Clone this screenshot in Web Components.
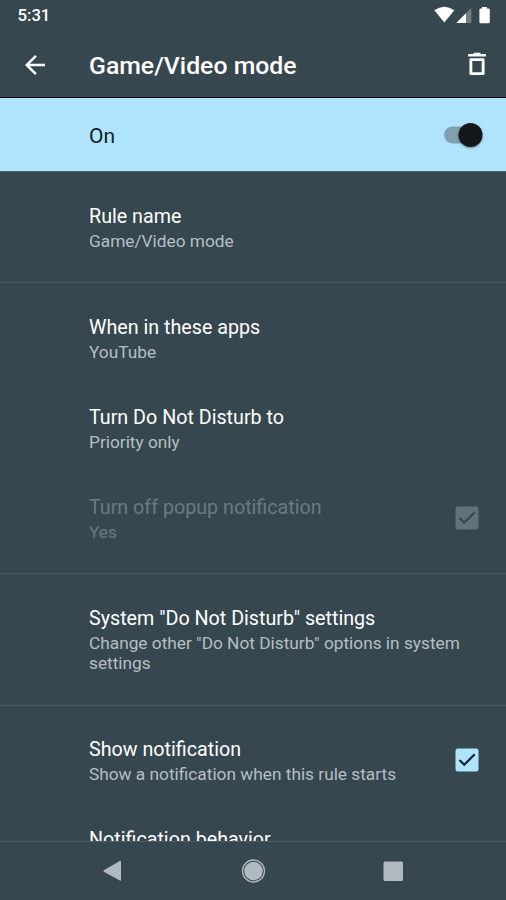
<!DOCTYPE html>
<html lang="en">
<head>
<meta charset="utf-8">
<title>Game/Video mode</title>
<style>
html,body{margin:0;height:100%;background:#37474f;font-family:Roboto,"Noto Sans",sans-serif}
</style>
</head>
<body>
<rule-screen></rule-screen>
<script>
const define = (name, html) => {
  const t = document.createElement('template');
  t.innerHTML = html;
  customElements.define(name, class extends HTMLElement {
    constructor() {
      super();
      this.attachShadow({mode: 'open'}).append(t.content.cloneNode(true));
    }
  });
};

define('status-bar', `<style>
:host{display:flex;height:30px;padding:0 16px 0 17.5px;justify-content:space-between;box-sizing:border-box;color:#fff}
span{font-size:16.7px;font-weight:500;line-height:31px}
svg{display:block}
</style><span>5:31</span>
<svg width="58" height="30" viewBox="432 0 58 30" fill="#fff">
<path d="M434.300 10.200Q444.300 3.200 454.300 10.200L444.300 22.500Z"/>
<path d="M471.300 8V23H456.300Z" fill-opacity=".3"/><path d="M466 13.300V23H456.300Z"/>
<path d="M480.500 8.500H482V7H487V8.500H488.500Q489.800 8.500 489.800 9.800V22Q489.800 23.300 488.500 23.300H480.700Q479.400 23.300 479.400 22V9.800Q479.400 8.500 480.500 8.500Z"/></svg>`);

define('app-bar', `<style>
:host{display:flex;height:68px;box-sizing:border-box;border-bottom:1.500px solid #06090b;padding:0 14px 0 20px;align-items:center;color:#fff}
h1{margin:4px 0 0;flex:1;font-size:24.8px;font-weight:500;line-height:30px;white-space:nowrap}
.back{width:69px;padding-top:2px}.del{padding-top:1px}
svg{display:block}
</style><div class="back"><svg width="30" height="30" viewBox="0 0 24 24" fill="#fff"><path d="M20 11H7.830l5.590-5.590L12 4l-8 8 8 8 1.410-1.410L7.830 13H20v-2z"/></svg></div>
<h1><slot></slot></h1>
<div class="del"><svg width="30" height="30" viewBox="0 0 24 24" fill="none" stroke="#fff" stroke-width="2.300"><path d="M4.900 5H19.100M9.200 3.900H14.800" stroke-width="2"/><path d="M7.100 8.500H16.900V19.700H7.100Z" stroke-linejoin="round"/></svg></div>`);

define('toggle-switch', `<style>
:host{display:block}svg{display:block}
.k{filter:drop-shadow(0 1px 1px #0006)}
</style><svg width="42" height="30" viewBox="0 0 42 30"><rect x="2" y="6.500" width="36" height="17" rx="8.500" fill="#7ea0b0"/><circle class="k" cx="28.500" cy="15" r="12" fill="#151819"/></svg>`);

define('master-row', `<style>
:host{display:flex;height:73px;background:#b0e4fc;align-items:center;justify-content:space-between;padding:3px 22px 0 89px;box-sizing:border-box;font-size:21px;line-height:28px;color:#101c22}
toggle-switch{margin-bottom:2px}
</style><span><slot></slot></span><toggle-switch></toggle-switch>`);

define('setting-section', `<style>
:host{display:block;border-top:1px solid #4b5b63;padding:11px 0 9px}
</style><slot></slot>`);

define('setting-row', `<style>
:host{display:flex;padding:19.500px 23px 22px 89px;align-items:center;justify-content:space-between;--t:#fff;--s:#b4bfc5}
:host([disabled]){--t:#6b7a82;--s:#6b7a82}
.t{font-size:19.700px;line-height:28px;color:var(--t);white-space:nowrap}
.s{font-size:17.280px;line-height:20.500px;color:var(--s)}
</style><div><div class="t"><slot name="title"></slot></div><div class="s"><slot></slot></div></div><slot name="control"></slot>`);

define('check-box', `<style>
:host{display:block;flex:none;--b:#b0e4fc;--c:#17262e}
:host([disabled]){--b:#61727b;--c:#37474f}
svg{display:block}
</style><svg width="32" height="24" viewBox="0 0 32 24"><rect x="4.500" y=".5" width="23" height="23" rx="2.500" fill="var(--b)"/><path d="M8.500 12L13.200 16.700L23.700 6.200" fill="none" stroke="var(--c)" stroke-width="2.300"/></svg>`);

define('nav-bar', `<style>
:host{display:flex;height:59px;box-sizing:border-box;border-top:1.500px solid #4b5b63;background:#37474f;justify-content:space-between;align-items:center;padding:0 98px 0 97px}
svg{display:block}
</style><svg width="30" height="30" viewBox="0 0 30 30" fill="#b0bac0"><path d="M6.800 14.300L22.800 5Q24 4.500 24 5.700V24Q24 25.200 22.800 24.600L6.800 15.700Q6 15 6.800 14.300Z"/></svg>
<svg width="30" height="30" viewBox="0 0 30 30" fill="#b0bac0"><circle cx="15.500" cy="15" r="9.300"/><circle cx="15.500" cy="15" r="11" fill="none" stroke="#b0bac0" stroke-width="1.300"/></svg>
<svg width="30" height="30" viewBox="0 0 30 30" fill="#b0bac0"><rect x="5.500" y="5.500" width="19.500" height="19.500" rx="1.500"/></svg>`);

define('rule-screen', `<style>
:host{display:flex;flex-direction:column;height:900px;width:506px;overflow:hidden;background:#37474f}
main{height:670px;overflow:hidden;flex:none}
setting-section:first-child{height:111px;box-sizing:border-box}
</style><status-bar></status-bar><app-bar>Game/Video mode</app-bar><master-row>On</master-row>
<main>
<setting-section><setting-row><span slot="title">Rule name</span>Game/Video mode</setting-row></setting-section>
<setting-section>
<setting-row><span slot="title">When in these apps</span>YouTube</setting-row>
<setting-row><span slot="title">Turn Do Not Disturb to</span>Priority only</setting-row>
<setting-row disabled><span slot="title">Turn off popup notification</span>Yes<check-box slot="control" disabled></check-box></setting-row>
</setting-section>
<setting-section><setting-row><span slot="title">System "Do Not Disturb" settings</span>Change other "Do Not Disturb" options in system settings</setting-row></setting-section>
<setting-section>
<setting-row><span slot="title">Show notification</span>Show a notification when this rule starts<check-box slot="control"></check-box></setting-row>
<setting-row><span slot="title">Notification behavior</span></setting-row>
</setting-section>
</main><nav-bar></nav-bar>`);
</script>
</body>
</html>
